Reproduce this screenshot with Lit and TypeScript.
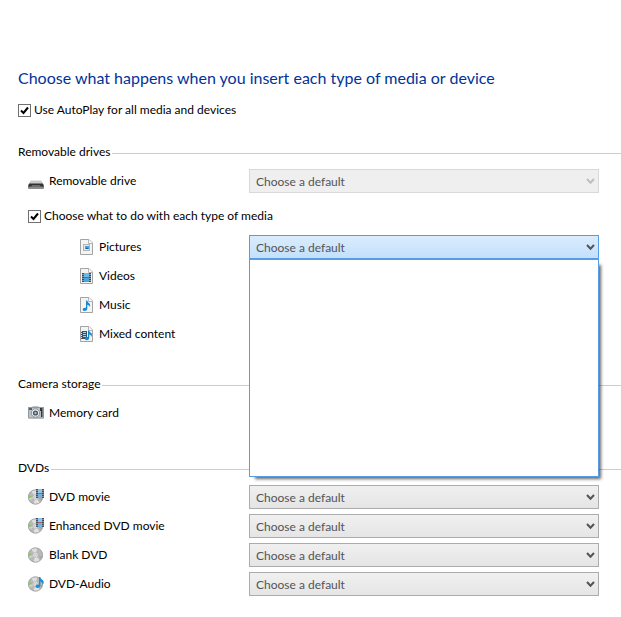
import { LitElement, html, svg, css } from "lit";
import { customElement, property, state } from "lit/decorators.js";

const page = svg`
  <path d="M2.500 .5H11L14.500 4V15.500H2.500Z" fill="#f4f4f4" stroke="#a3a3a3"/>
  <path d="M10.500 .5V4.500H14.500" fill="#fff" stroke="#b4b4b4"/>`;

const disc = svg`
  <circle cx="7.500" cy="8" r="7.500" fill="#b9b9b9"/>
  <path d="M7.500 8L3 2A7.500 7.500 0 0 1 9.500 .8Z" fill="#dedede"/>
  <path d="M7.500 8L12 14A7.500 7.500 0 0 1 5.500 15.200Z" fill="#e2e2e2"/>
  <path d="M7.500 8L.3 7A7.500 7.500 0 0 0 1.200 12Z" fill="#cfcfcf"/>
  <path d="M5 8L1 9A7.500 7.500 0 0 1 1.400 6Z" fill="#7fd04c"/>
  <path d="M10 8.500L14.500 9.500A7.500 7.500 0 0 1 13.500 12Z" fill="#b3a39e"/>
  <circle cx="7.500" cy="8" r="7.100" fill="none" stroke="#a0a0a0" stroke-width=".8"/>
  <circle cx="7.500" cy="8" r="2.600" fill="#e4e4e4" stroke="#b0b0b0" stroke-width=".6"/>
  <circle cx="7.500" cy="8" r="1" fill="#fff" stroke="#999" stroke-width=".5"/>`;

const film = svg`
  <rect x="8" y="0" width="8" height="9" fill="#42505e"/>
  <rect x="10" y="0" width="4" height="4" fill="#8cc6e8"/>
  <rect x="10" y="5" width="4" height="4" fill="#6fb3de"/>
  <rect x="10" y="4" width="4" height="1" fill="#a8606c"/>
  <path d="M9 1V9M15 1V9" stroke="#c3ccd4" stroke-dasharray="1 1"/>`;

const icons = {
  drive: svg`
    <path d="M3 8H13L16 12V14.500Q16 16 14.500 16H1.500Q0 16 0 14.500V12Z" fill="#777"/>
    <path d="M3.200 7.500H12.800L15 11H1Z" fill="#c9c9c9"/>
    <path d="M1.500 10.500H14.500L15.500 13.500H.5Z" fill="#303030"/>
    <path d="M4 12H12L13 14H3Z" fill="#6c6c6c"/>
    <path d="M1 15H15" stroke="#a0a0a0"/>`,
  picture: svg`${page}
    <rect x="5.500" y="5.500" width="6" height="6" fill="#dcebf5" stroke="#aab6bf"/>
    <rect x="7" y="7" width="4" height="3" fill="#4aa3dc"/>
    <path d="M7 10L9 8.500L11 10Z" fill="#28608f"/>`,
  video: svg`${page}
    <rect x="4" y="5" width="9" height="9" fill="#34495a"/>
    <rect x="6" y="5" width="5" height="4" fill="#6bb9e6"/>
    <rect x="6" y="10" width="5" height="4" fill="#4ba3dc"/>
    <rect x="6" y="9" width="5" height="1" fill="#a8545f"/>
    <path d="M5 6V14M12 6V14" stroke="#dfe6ec" stroke-dasharray="1 1"/>`,
  music: svg`${page}
    <path d="M8 3.500H9.200Q9.500 5.500 11.500 6.500Q13 8 11.500 10.500Q12 8.500 9.300 7.700V12Q9 14 6.500 14Q4.300 13.800 4.700 12Q5.500 10.500 8 10.800Z" fill="#1689d6"/>`,
  mixed: svg`${page}
    <rect x="3" y="5" width="6" height="8" fill="#40505e"/>
    <path d="M5 6.500H8M5 8.500H8M5 10.500H8" stroke="#a9cfe6"/>
    <path d="M3.500 5V13" stroke="#e5eaef" stroke-dasharray="1 1"/>
    <path d="M10 4.500H11.200Q11.300 6 13.200 7Q14.800 8.500 13 11Q13.500 9 11.300 8.300V12Q11 14.300 8.500 14.200Q6.400 14 6.800 12.300Q7.500 10.800 10 11Z" fill="#1689d6"/>`,
  camera: svg`
    <path d="M0 2H4L5 1H10L11 2H16V13.500H0Z" fill="#bcc3c8"/>
    <path d="M.5 2.500H15.500V13H.5Z" fill="none" stroke="#929aa0"/>
    <rect x="1" y="3" width="3" height="2" fill="#5b6266"/>
    <path d="M12 3H14.500V12H13V6H12Z" fill="#30383d"/>
    <circle cx="7.500" cy="8" r="4.200" fill="#eceff1" stroke="#7b8388" stroke-width=".8"/>
    <circle cx="7.500" cy="8" r="2.600" fill="#4a5359"/>
    <circle cx="7.500" cy="8" r="1.200" fill="#a7bccb"/>`,
  movie: svg`${disc}${film}`,
  disc,
  audio: svg`${disc}
    <path d="M11 1H12.300Q12.500 3 14.500 4Q17 6 14.500 9Q15 6.500 12.400 5.500V9.500Q12 12 9.500 12Q7 11.800 7.500 9.900Q8.500 8.200 11 8.700Z" fill="#1b8edb"/>`,
};

type IconName = keyof typeof icons;

@customElement("media-icon")
class MediaIcon extends LitElement {
  @property() name: IconName = "disc";
  static styles = css`
    :host { display: block; width: 16px; height: 16px; }
    svg { display: block; }
  `;
  render() {
    return html`<svg width="16" height="16" viewBox="0 0 16 16" aria-hidden="true">${icons[this.name]}</svg>`;
  }
}

@customElement("tick-box")
class TickBox extends LitElement {
  @property() label = "";
  static styles = css`
    :host { display: block; }
    label { display: flex; align-items: center; gap: 3px; height: 20px; }
    .box { display: grid; width: 13px; height: 13px; }
    input, svg { grid-area: 1 / 1; }
    input {
      appearance: none; margin: 0; width: 13px; height: 13px;
      border: 1px solid #707070; background: #fff;
    }
    svg { visibility: hidden; pointer-events: none; z-index: 1; }
    input:checked + svg { visibility: visible; }
  `;
  render() {
    return html`<label>
      <span class="box">
        <input type="checkbox" checked />
        <svg width="13" height="13" viewBox="0 0 13 13"><path d="M3 6.500L5.500 9L10 3.500" fill="none" stroke="#000" stroke-width="2"/></svg>
      </span>
      ${this.label}
    </label>`;
  }
}

@customElement("default-picker")
class DefaultPicker extends LitElement {
  @property() label = "";
  @property({ type: Boolean }) disabled = false;
  @property({ type: Boolean }) open = false;
  static styles = css`
    :host { display: block; position: relative; }
    .field { display: grid; align-items: center; color: #545454; }
    select, svg { grid-area: 1 / 1; }
    svg { justify-self: end; margin-right: 4px; pointer-events: none; z-index: 1; }
    select {
      appearance: none; box-sizing: border-box; width: 100%; height: 24px; margin: 0;
      padding: 2px 6px 0; border: 1px solid #acacac; border-radius: 0; outline: none;
      background: linear-gradient(#f0f0f0, #e5e5e5);
      color: #545454; font: inherit; opacity: 1;
    }
    .disabled { color: #bfbfbf; }
    .disabled select { border-color: #d9d9d9; background: #efefef; }
    .open select { border-color: #569de5; background: linear-gradient(#daecfc, #c4e0fc); }
    .list {
      position: absolute; top: 100%; left: 0; right: 0; z-index: 2;
      box-sizing: border-box; height: 218px;
      border: 1px solid #569de5; background: #fff;
      box-shadow: 4px 4px 3px -2px rgba(0, 0, 0, 0.6);
    }
  `;
  render() {
    const kind = this.open ? "open" : this.disabled ? "disabled" : "";
    return html`<div class="field ${kind}">
        <select aria-label=${this.label} ?disabled=${this.disabled}><option>Choose a default</option></select>
        <svg width="9" height="7" viewBox="0 0 9 7" aria-hidden="true"><path d="M1 1L4.500 4.800L8 1" fill="none" stroke="currentColor" stroke-width="2"/></svg>
      </div>
      ${this.open ? html`<div class="list" role="listbox" aria-label=${this.label}></div>` : ""}`;
  }
}

interface Row { icon: IconName; label: string; picker?: "normal" | "disabled" | "open"; }

@customElement("app-root")
class AppRoot extends LitElement {
  @state() private media: Row[] = [
    { icon: "picture", label: "Pictures", picker: "open" },
    { icon: "video", label: "Videos" },
    { icon: "music", label: "Music" },
    { icon: "mixed", label: "Mixed content" },
  ];
  @state() private discs: Row[] = [
    { icon: "movie", label: "DVD movie", picker: "normal" },
    { icon: "movie", label: "Enhanced DVD movie", picker: "normal" },
    { icon: "disc", label: "Blank DVD", picker: "normal" },
    { icon: "audio", label: "DVD-Audio", picker: "normal" },
  ];

  static styles = css`
    :host {
      display: block; padding: 64px 0 20px 18px; background: #fff; color: #000;
      font: 12px/20px Lato, "Open Sans", sans-serif;
    }
    h1 { margin: 0 0 8px; font-size: 16px; line-height: 28px; font-weight: 400; color: #003399; }
    section { margin-top: 33px; }
    .first { margin-top: 22px; }
    .after-media { margin-top: 28px; }
    h2 {
      display: flex; align-items: center; gap: 2px; margin: 0 0 7px;
      font-size: 12px; line-height: 20px; font-weight: 400;
    }
    h2::after { content: ""; flex: 1; height: 1px; margin-top: 3px; background: #cdcdcd; }
    .rows { display: grid; gap: 5px; }
    .row {
      display: grid; grid-template-columns: 221px minmax(0, 1fr);
      height: 24px; align-items: center; margin: 0 22px 0 10px;
    }
    .name { display: flex; align-items: center; gap: 5px; }
    .media .name { padding-left: 50px; }
    .each { margin: 13px 0 9px 10px; }
  `;

  private row(r: Row) {
    return html`<div class="row">
      <span class="name"><media-icon .name=${r.icon}></media-icon>${r.label}</span>
      ${r.picker
        ? html`<default-picker .label=${r.label} ?disabled=${r.picker === "disabled"} ?open=${r.picker === "open"}></default-picker>`
        : ""}
    </div>`;
  }

  render() {
    return html`
      <h1>Choose what happens when you insert each type of media or device</h1>
      <tick-box label="Use AutoPlay for all media and devices"></tick-box>
      <section class="first">
        <h2>Removable drives</h2>
        ${this.row({ icon: "drive", label: "Removable drive", picker: "disabled" })}
        <tick-box class="each" label="Choose what to do with each type of media"></tick-box>
        <div class="rows media">${this.media.map((r) => this.row(r))}</div>
      </section>
      <section class="after-media">
        <h2>Camera storage</h2>
        ${this.row({ icon: "camera", label: "Memory card" })}
      </section>
      <section>
        <h2>DVDs</h2>
        <div class="rows">${this.discs.map((r) => this.row(r))}</div>
      </section>`;
  }
}
